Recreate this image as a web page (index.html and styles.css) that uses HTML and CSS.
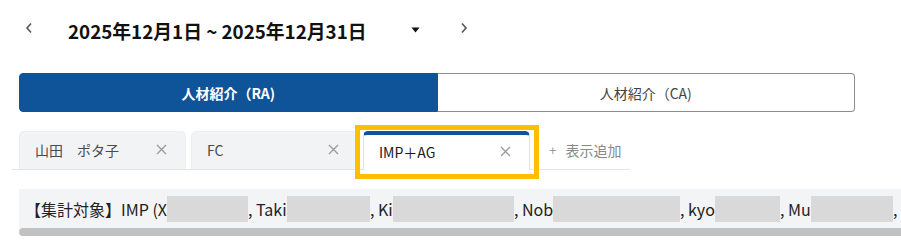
FILE: index.html
```html
<!DOCTYPE html>
<html lang="ja">
<head>
  <meta charset="UTF-8">
  <meta name="viewport" content="width=device-width,initial-scale=1.0">
  <title>集計</title>
  <link rel="stylesheet" href="styles.css">
</head>
<body>
  <header class="date-nav">
    <button class="nav-btn" aria-label="前へ">
      <svg width="8" height="12" viewBox="0 0 8 12"><path d="M6 1.5 L2 6 L6 10.5" fill="none" stroke="#555" stroke-width="1.6"/></svg>
    </button>
    <div class="date-select">
      <span class="date-label">2025年12月1日 ~ 2025年12月31日</span>
      <svg class="caret" width="9" height="6" viewBox="0 0 9 6"><path d="M0.5 0.5 H8.5 L4.5 5.5 Z" fill="#111"/></svg>
    </div>
    <button class="nav-btn next" aria-label="次へ">
      <svg width="8" height="12" viewBox="0 0 8 12"><path d="M2 1.5 L6 6 L2 10.5" fill="none" stroke="#555" stroke-width="1.6"/></svg>
    </button>
  </header>

  <div class="toggle">
    <button class="toggle-item active">人材紹介（RA)</button>
    <button class="toggle-item">人材紹介（CA)</button>
  </div>

  <nav class="tabs">
    <div class="tab">
      <span>山田　ポタ子</span>
      <svg class="close" width="11" height="11" viewBox="0 0 11 11"><path d="M1 1 L10 10 M10 1 L1 10" stroke="#9a9a9a" stroke-width="1.3"/></svg>
    </div>
    <div class="tab">
      <span>FC</span>
      <svg class="close" width="11" height="11" viewBox="0 0 11 11"><path d="M1 1 L10 10 M10 1 L1 10" stroke="#9a9a9a" stroke-width="1.3"/></svg>
    </div>
    <div class="tab active">
      <span>IMP＋AG</span>
      <svg class="close" width="11" height="11" viewBox="0 0 11 11"><path d="M1 1 L10 10 M10 1 L1 10" stroke="#9a9a9a" stroke-width="1.3"/></svg>
      <div class="highlight"></div>
    </div>
    <button class="add-tab"><span class="plus">+</span>表示追加</button>
  </nav>

  <section class="summary">
    <div class="summary-text">
      <span class="member" style="width:223px">【集計対象】IMP (X<i class="mask"></i></span>
      <span class="member" style="width:122px">, Taki<i class="mask"></i></span>
      <span class="member" style="width:144px">, Ki<i class="mask"></i></span>
      <span class="member" style="width:166px">, Nob<i class="mask"></i></span>
      <span class="member" style="width:100px">, kyo<i class="mask"></i></span>
      <span class="member" style="width:113px">, Mu<i class="mask"></i></span>
      <span class="member">,</span>
    </div>
    <div class="scrollbar"></div>
  </section>
</body>
</html>
```

FILE: styles.css
```css
:root {
  --blue: #0f5399;
  --text: #222;
  --muted: #8c8c8c;
  --tab-bg: #f2f3f5;
  --line: #e3e5e8;
  --yellow: #ffbf00;
}
*, *::before, *::after { box-sizing: border-box; }
body {
  margin: 0;
  font-family: "Noto Sans CJK JP", "Noto Sans", sans-serif;
  color: var(--text);
  background: #fff;
  overflow: hidden;
}
button {
  font: inherit;
  background: none;
  border: none;
  padding: 0;
  cursor: pointer;
}

/* date header */
.date-nav {
  display: flex;
  align-items: center;
  height: 62px;
  padding-left: 25px;
}
.nav-btn {
  display: flex;
  width: 10px;
  height: 14px;
  margin-top: -4px;
}
.date-select {
  display: flex;
  align-items: center;
  justify-content: space-between;
  width: 352px;
  margin-left: 33px;
}
.date-label {
  font-size: 18.8px;
  font-weight: 700;
  color: #111;
  margin-top: -1px;
}
.caret { margin-top: -2px; }
.nav-btn.next { margin-left: 40px; }

/* RA / CA toggle */
.toggle {
  display: flex;
  margin: 11px 0 0 19px;
  width: 836px;
  height: 39px;
}
.toggle-item {
  flex: 1;
  font-size: 14px;
  color: #444;
  border: 1px solid #8d8d8d;
  border-left: none;
  border-radius: 0 4px 4px 0;
}
.toggle-item.active {
  background: var(--blue);
  color: #fff;
  font-weight: 700;
  border: 1px solid var(--blue);
  border-radius: 4px 0 0 4px;
}

/* tabs */
.tabs {
  display: inline-flex;
  align-items: flex-end;
  gap: 5px;
  margin: 19px 0 0 12px;
  padding: 0 8px 0 7px;
  border-bottom: 1px solid var(--line);
}
.tab {
  position: relative;
  display: flex;
  align-items: center;
  justify-content: space-between;
  width: 167px;
  height: 38px;
  padding: 0 18px 2px 15px;
  background: var(--tab-bg);
  border: 1px solid #eceef1;
  border-bottom: none;
  border-radius: 5px 5px 0 0;
  font-size: 14px;
  color: #4a4a4a;
}
.tab.active {
  background: #fff;
  color: #1a1a1a;
  border: 1px solid var(--line);
  border-top: 4px solid var(--blue);
  border-bottom: none;
  margin-bottom: -1px;
  height: 39px;
  padding-top: 0;
}
.highlight {
  position: absolute;
  left: -9px;
  right: -10px;
  top: -10px;
  bottom: -9px;
  border: 5px solid var(--yellow);
  pointer-events: none;
}
.add-tab {
  height: 38px;
  margin-left: 14px;
  font-size: 14px;
  color: #888;
}
.plus {
  font-weight: 300;
  margin-right: 9px;
}

/* summary */
.summary {
  margin: 19px 0 0 19px;
}
.summary-text {
  display: flex;
  align-items: center;
  height: 39px;
  padding-left: 6px;
  background: #f3f4f6;
  font-size: 16px;
  white-space: nowrap;
}
.member {
  display: flex;
  align-items: center;
  flex: none;
}
.mask {
  flex: 1;
  height: 26px;
  background: #d9d9d9;
}
.scrollbar {
  height: 8px;
  background: #c1c1c1;
  border-radius: 4px 0 0 4px;
}
```
